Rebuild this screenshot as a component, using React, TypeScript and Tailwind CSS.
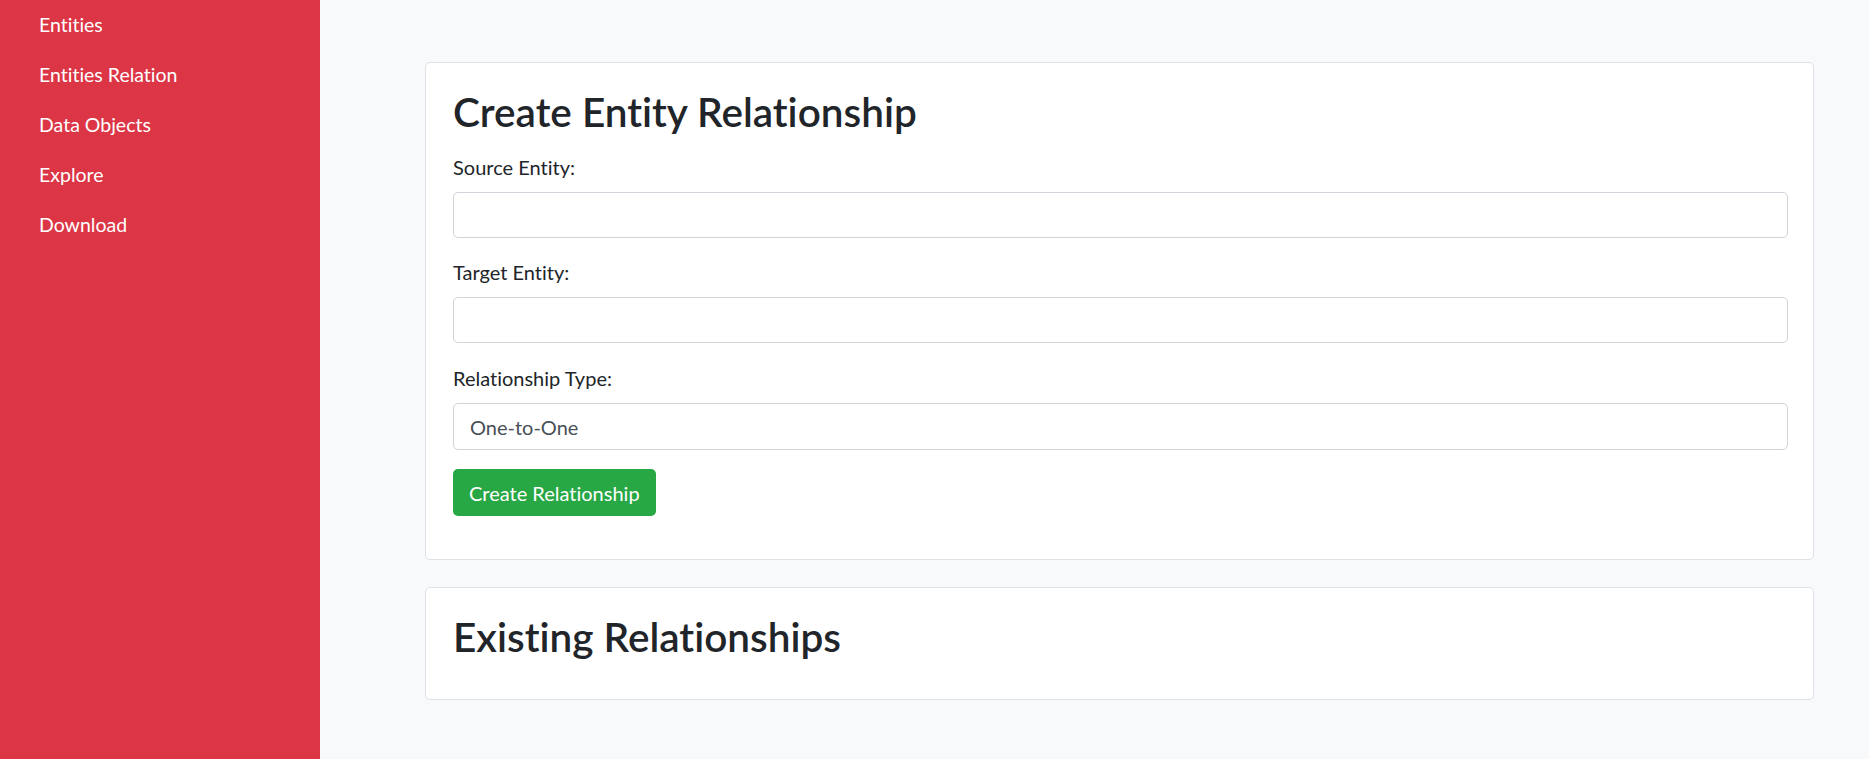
import React from "react";

const links = ["Entities", "Entities Relation", "Data Objects", "Explore", "Download"];

function Field({ label, value, tall, className }: { label: string; value?: string; tall?: boolean; className?: string }) {
  return (
    <div className={className}>
      <div className="h-[29px] leading-[29px] mb-[10px] text-[20px] text-[#212529]">{label}</div>
      <div
        className={`${tall ? "h-[47px]" : "h-[46px]"} w-full rounded-[5px] border border-[#ced4da] bg-white px-[16px] flex items-center text-[20px] text-[#495057]`}
      >
        {value}
      </div>
    </div>
  );
}

export default function App() {
  return (
    <div className="flex min-h-screen font-['Lato',sans-serif] [font-variant-ligatures:none]">
      <aside className="w-[320px] shrink-0 bg-[#dc3545]">
        <nav className="flex flex-col">
          {links.map((l) => (
            <a key={l} className="h-[50px] flex items-center pl-[39px] text-[19.5px] text-white">
              {l}
            </a>
          ))}
        </nav>
      </aside>
      <main className="flex-1 bg-[#f8f9fa] pt-[62px] pl-[105px] pr-[55px]">
        <section className="rounded-[5px] border border-[#dee2e6] bg-white pl-[27px] pr-[25px] pt-[26px] pb-[43px]">
          <h1 className="h-[46px] leading-[46px] text-[40.5px] font-semibold text-[#212529] mb-[18px]">
            Create Entity Relationship
          </h1>
          <Field label="Source Entity:" className="mb-[20px]" />
          <Field label="Target Entity:" className="mb-[21px]" />
          <Field label="Relationship Type:" value="One-to-One" tall className="mb-[19px]" />
          <button className="h-[47px] rounded-[5px] bg-[#28a745] px-[16px] text-white text-[20px] flex items-center justify-center">
            Create Relationship
          </button>
        </section>
        <section className="mt-[27px] rounded-[5px] border border-[#dee2e6] bg-white pl-[27px] pr-[25px] pt-[26px] pb-[39px]">
          <h2 className="h-[46px] leading-[46px] text-[40.5px] font-semibold text-[#212529]">Existing Relationships</h2>
        </section>
      </main>
    </div>
  );
}
